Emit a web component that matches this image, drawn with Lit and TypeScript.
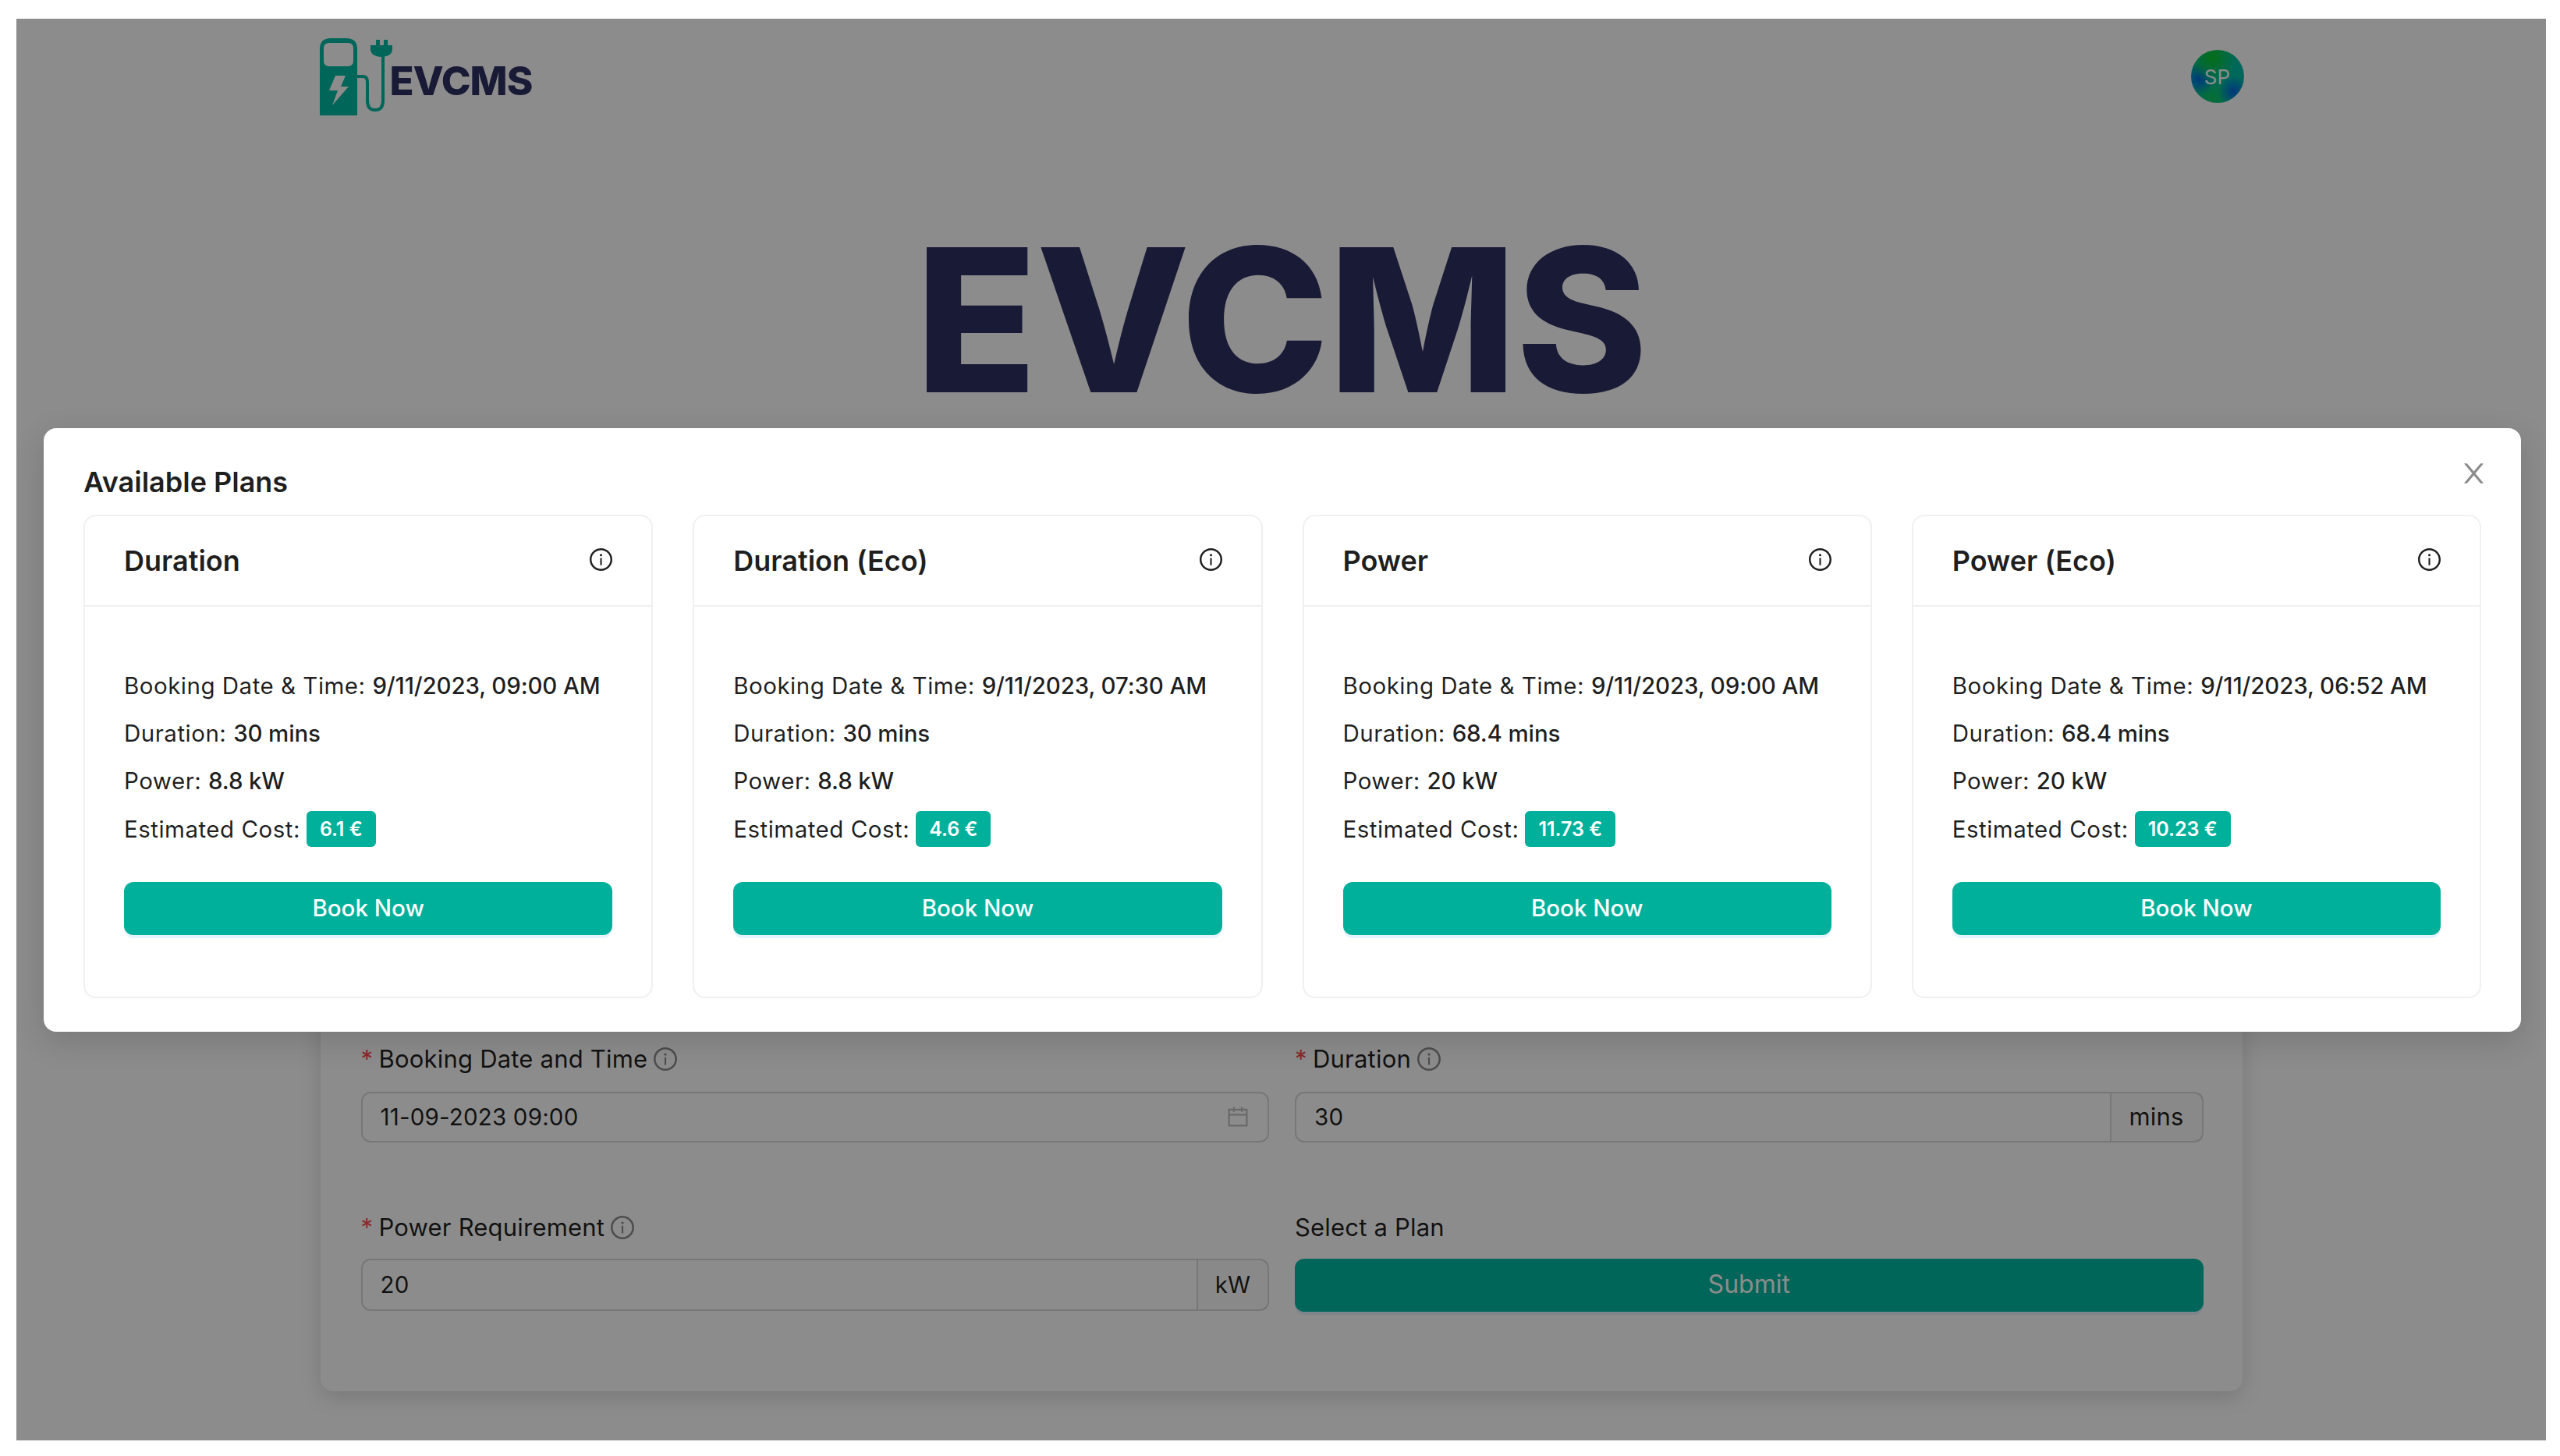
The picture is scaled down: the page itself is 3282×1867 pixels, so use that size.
import { LitElement, html, css, svg } from "lit";
import { customElement } from "lit/decorators.js";

interface Plan {
  name: string;
  date: string;
  duration: string;
  power: string;
  cost: string;
}

const PLANS: Plan[] = [
  { name: "Duration", date: "9/11/2023, 09:00 AM", duration: "30 mins", power: "8.8 kW", cost: "6.1 €" },
  { name: "Duration (Eco)", date: "9/11/2023, 07:30 AM", duration: "30 mins", power: "8.8 kW", cost: "4.6 €" },
  { name: "Power", date: "9/11/2023, 09:00 AM", duration: "68.4 mins", power: "20 kW", cost: "11.73 €" },
  { name: "Power (Eco)", date: "9/11/2023, 06:52 AM", duration: "68.4 mins", power: "20 kW", cost: "10.23 €" },
];

const infoIcon = (cls: string) => html`<svg class=${cls} viewBox="64 64 896 896" fill="currentColor">
  <path d="M512 64C264.6 64 64 264.6 64 512s200.6 448 448 448 448-200.6 448-448S759.4 64 512 64zm0 820c-205.4 0-372-166.6-372-372s166.6-372 372-372 372 166.6 372 372-166.6 372-372 372z"></path>
  <path d="M464 336a48 48 0 1096 0 48 48 0 10-96 0zm72 112h-48c-4.4 0-8 3.6-8 8v272c0 4.4 3.6 8 8 8h48c4.4 0 8-3.6 8-8V456c0-4.4-3.6-8-8-8z"></path>
</svg>`;

const calendarIcon = svg`<path d="M880 184H712v-64c0-4.4-3.6-8-8-8h-56c-4.4 0-8 3.6-8 8v64H384v-64c0-4.4-3.6-8-8-8h-56c-4.4 0-8 3.6-8 8v64H144c-17.7 0-32 14.3-32 32v664c0 17.7 14.3 32 32 32h736c17.7 0 32-14.3 32-32V216c0-17.7-14.3-32-32-32zm-40 656H184V460h656v380zM184 392V256h128v48c0 4.4 3.6 8 8 8h56c4.4 0 8-3.6 8-8v-48h256v48c0 4.4 3.6 8 8 8h56c4.4 0 8-3.6 8-8v-48h128v136H184z"></path>`;

const closeIcon = svg`<path d="M563.8 512l262.5-312.9c4.4-5.2.7-13.1-6.1-13.1h-79.8c-4.7 0-9.2 2.1-12.3 5.7L511.6 449.8 295.1 191.7c-3-3.6-7.5-5.7-12.3-5.7H203c-6.8 0-10.5 7.9-6.1 13.1L459.4 512 196.9 824.9A7.95 7.95 0 00203 838h79.8c4.7 0 9.2-2.1 12.3-5.7l216.5-258.1 216.5 258.1c3 3.6 7.5 5.7 12.3 5.7h79.8c6.8 0 10.5-7.9 6.1-13.1L563.8 512z"></path>`;

@customElement("app-root")
export class AppRoot extends LitElement {
  static override styles = css`
    :host {
      display: block;
      box-sizing: border-box;
      height: 1867px;
      padding: 24px 18px 20px 21px;
      background: #fff;
      font-family: Inter, "Liberation Sans", sans-serif;
      font-size: 29.5px;
      letter-spacing: 0.2px;
      color: rgba(0, 0, 0, 0.88);
    }

    * {
      box-sizing: border-box;
    }

    .screen {
      position: relative;
      height: 100%;
      overflow: hidden;
      background: #fff;
    }

    .wrap {
      width: 2464px;
      margin: 0 auto;
    }

    /* header */
    .header {
      display: flex;
      justify-content: space-between;
      height: 135px;
      padding-top: 25px;
    }

    .logo {
      display: flex;
      height: 100px;
      margin-left: -1px;
    }

    .logo svg {
      width: 94px;
      height: 100px;
      margin-right: -4px;
      color: #00baa2;
    }

    .logo-text {
      padding-top: 24px;
      font-size: 51px;
      font-weight: 800;
      line-height: 62px;
      letter-spacing: -1px;
      color: #2f3163;
    }

    .avatar {
      display: flex;
      align-items: center;
      justify-content: center;
      width: 68px;
      height: 68px;
      margin-top: 15px;
      margin-right: -2px;
      border-radius: 50%;
      font-size: 26px;
      letter-spacing: 0;
      color: #fff;
      background:
        radial-gradient(circle at 40% 15%, #0cc82a 0%, transparent 45%),
        radial-gradient(circle at 15% 55%, #0068e0 0%, transparent 30%),
        radial-gradient(circle at 80% 78%, #0068e0 0%, transparent 26%),
        radial-gradient(circle at 40% 90%, #0cc860 0%, transparent 40%),
        #00bda6;
    }

    .hero {
      height: 941px;
      padding-top: 101px;
      text-align: center;
      font-size: 256px;
      font-weight: 800;
      line-height: 300px;
      letter-spacing: -1px;
      color: #2f3163;
    }

    /* form behind the modal */
    .form {
      height: 684px;
      padding: 233px 50px 0 52px;
      border-radius: 16px;
      background: #fff;
      box-shadow: 0 8px 28px rgba(0, 0, 0, 0.14);
    }

    .form-grid {
      display: grid;
      grid-template-columns: 1fr 1fr;
      column-gap: 33px;
      row-gap: 84px;
    }

    .label {
      display: flex;
      align-items: center;
      gap: 8px;
      height: 50px;
      margin-bottom: 17px;
      font-size: 31px;
      line-height: 50px;
    }

    .req {
      width: 15px;
      color: #ff4d4f;
    }

    .label-info {
      width: 30px;
      height: 30px;
      color: rgba(0, 0, 0, 0.45);
    }

    .control {
      display: flex;
      height: 65px;
      border: 2px solid #d9d9d9;
      border-radius: 12px;
    }

    .control.tall {
      height: 67px;
      margin-top: -2px;
    }

    .control-value {
      display: flex;
      flex: 1;
      align-items: center;
      justify-content: space-between;
      padding: 0 23px 2px;
    }

    .calendar {
      width: 28px;
      height: 28px;
      margin-right: 1px;
      color: rgba(0, 0, 0, 0.25);
    }

    .addon {
      display: flex;
      align-items: center;
      justify-content: center;
      padding-bottom: 2px;
      border-left: 2px solid #d9d9d9;
      background: rgba(0, 0, 0, 0.02);
    }

    .addon.mins {
      width: 118px;
      font-size: 31px;
    }

    .addon.kw {
      width: 91px;
    }

    .submit {
      width: 100%;
      height: 68px;
      margin-top: -2px;
      padding: 0 0 3px;
      border: none;
      border-radius: 12px;
      font: inherit;
      font-size: 32px;
      color: #fff;
      background: #00baa2;
      box-shadow: 0 4px 0 rgba(5, 145, 255, 0.1);
    }

    /* modal */
    .mask {
      position: absolute;
      inset: 0;
      background: rgba(0, 0, 0, 0.45);
    }

    .modal {
      position: absolute;
      top: 525px;
      left: 35px;
      width: 3176px;
      height: 774px;
      padding: 39px 51px 0;
      border-radius: 16px;
      background: #fff;
      box-shadow: 0 12px 40px rgba(0, 0, 0, 0.14);
    }

    .close {
      position: absolute;
      top: 45px;
      right: 48px;
      width: 25px;
      height: 26px;
      color: rgba(0, 0, 0, 0.45);
    }

    .modal-title {
      height: 60px;
      margin-bottom: 12px;
      font-size: 36px;
      font-weight: 600;
      line-height: 60px;
      letter-spacing: 0;
    }

    .plans {
      display: grid;
      grid-template-columns: repeat(4, 1fr);
      column-gap: 51px;
    }

    .plan {
      height: 620px;
      border: 2px solid #f0f0f0;
      border-radius: 16px;
    }

    .plan-head {
      display: flex;
      align-items: center;
      justify-content: space-between;
      height: 116px;
      padding: 0 50px;
      border-bottom: 2px solid #f0f0f0;
      font-size: 36px;
      font-weight: 600;
      letter-spacing: 0;
    }

    .plan-info {
      width: 29px;
      height: 29px;
      margin-top: -3px;
      color: rgba(0, 0, 0, 0.88);
    }

    .plan-body {
      padding: 70px 50px 0;
    }

    .row {
      display: flex;
      align-items: center;
      height: 61.3px;
      white-space: pre;
      letter-spacing: 0.5px;
    }

    .row b {
      font-weight: 500;
      letter-spacing: -0.15px;
    }

    .badge {
      height: 46px;
      margin-left: 8px;
      padding: 0 17px;
      border-radius: 6px;
      font-size: 25px;
      font-weight: 600;
      line-height: 46px;
      letter-spacing: 0;
      color: #fff;
      background: #00b09b;
    }

    .book {
      display: block;
      width: 100%;
      height: 68px;
      margin-top: 38px;
      padding: 0 0 3px;
      border: none;
      border-radius: 12px;
      font: inherit;
      font-weight: 500;
      color: #fff;
      background: #00b09b;
      box-shadow: 0 4px 0 rgba(5, 145, 255, 0.1);
    }
  `;

  private _field(label: string, content: unknown, tall = false, required = true) {
    return html`
      <div class="field">
        <div class="label">
          ${required ? html`<span class="req">*</span>` : null}
          <span>${label}</span>
          ${required ? infoIcon("label-info") : null}
        </div>
        <div class="control ${tall ? "tall" : ""}">${content}</div>
      </div>
    `;
  }

  private _renderPlan(plan: Plan) {
    return html`
      <div class="plan">
        <div class="plan-head">
          <span>${plan.name}</span>
          ${infoIcon("plan-info")}
        </div>
        <div class="plan-body">
          <div class="row">Booking Date &amp; Time: <b>${plan.date}</b></div>
          <div class="row">Duration: <b>${plan.duration}</b></div>
          <div class="row">Power: <b>${plan.power}</b></div>
          <div class="row">Estimated Cost:<span class="badge">${plan.cost}</span></div>
          <button class="book">Book Now</button>
        </div>
      </div>
    `;
  }

  override render() {
    return html`
      <div class="screen">
        <div class="page">
          <div class="wrap header">
            <div class="logo">
              <svg viewBox="0 0 94 100">
                <path
                  fill="currentColor"
                  fill-rule="evenodd"
                  d="M0 99V14Q0 0 14 0H34Q48 0 48 14V99ZM12 6Q5 6 5 13V29Q5 36 12 36H36Q43 36 43 29V13Q43 6 36 6ZM20 48 12 67H23L16 86 37 62H27L33 48Z"
                ></path>
                <path
                  fill="none"
                  stroke="currentColor"
                  stroke-width="4"
                  d="M48 49H55Q61 49 61 56V80Q61 92 71 92 81 92 81 80V20"
                ></path>
                <path fill="currentColor" d="M72 2H77V9H82V2H87V9H93V14Q93 23 79 24 65 23 65 14V9H72Z"></path>
              </svg>
              <span class="logo-text">EVCMS</span>
            </div>
            <div class="avatar">SP</div>
          </div>
          <div class="hero">EVCMS</div>
          <div class="wrap form">
            <div class="form-grid">
              ${this._field(
                "Booking Date and Time",
                html`<div class="control-value">
                  <span>11-09-2023 09:00</span>
                  <svg class="calendar" viewBox="64 64 896 896" fill="currentColor">${calendarIcon}</svg>
                </div>`
              )}
              ${this._field(
                "Duration",
                html`<div class="control-value">30</div>
                  <div class="addon mins">mins</div>`
              )}
              ${this._field(
                "Power Requirement",
                html`<div class="control-value">20</div>
                  <div class="addon kw">kW</div>`,
                true
              )}
              <div class="field">
                <div class="label">Select a Plan</div>
                <button class="submit">Submit</button>
              </div>
            </div>
          </div>
        </div>
        <div class="mask"></div>
        <div class="modal">
          <svg class="close" viewBox="190 180 644 664" fill="currentColor">${closeIcon}</svg>
          <div class="modal-title">Available Plans</div>
          <div class="plans">${PLANS.map((p) => this._renderPlan(p))}</div>
        </div>
      </div>
    `;
  }
}

declare global {
  interface HTMLElementTagNameMap {
    "app-root": AppRoot;
  }
}
